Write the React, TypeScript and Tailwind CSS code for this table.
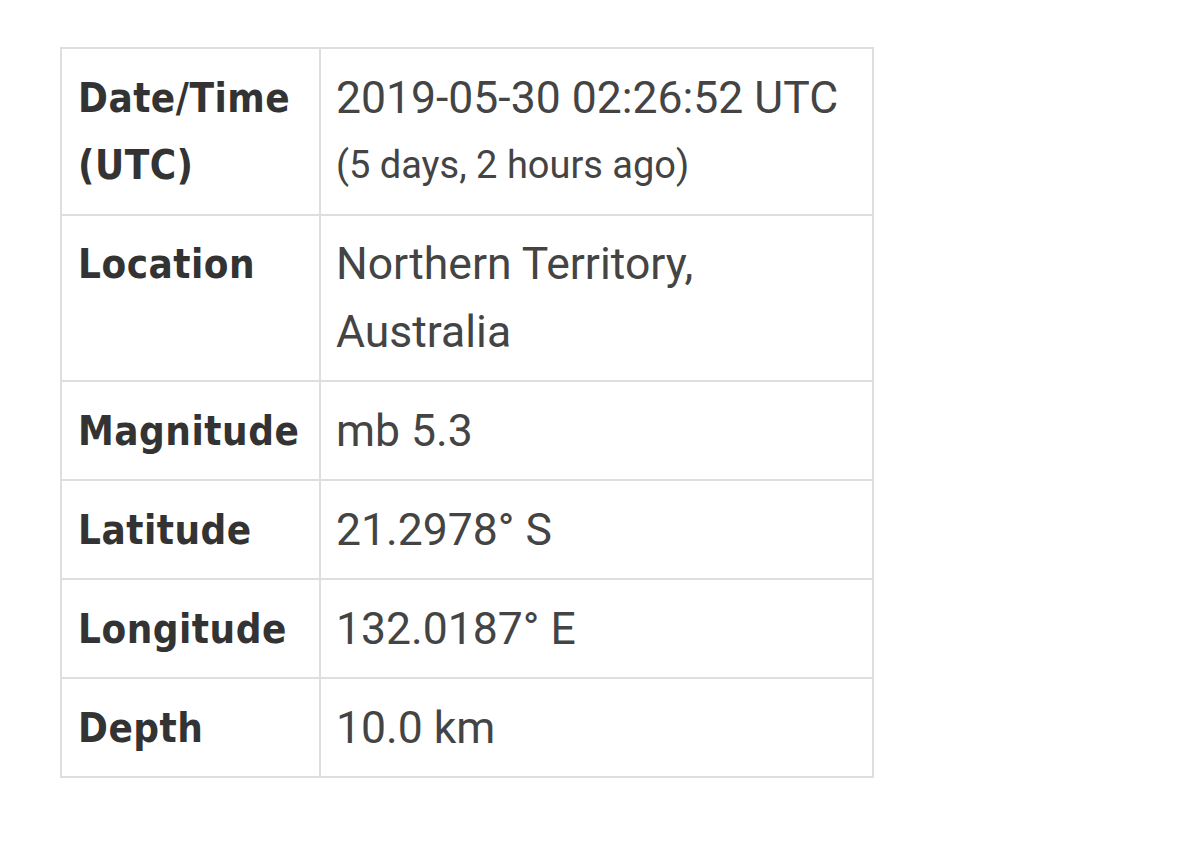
const rows: { label: string[]; value: React.ReactNode }[] = [
  {
    label: ["Date/Time", "(UTC)"],
    value: (
      <>
        <div>2019-05-30 02:26:52 UTC</div>
        <div className="text-[38px]">(5 days, 2 hours ago)</div>
      </>
    ),
  },
  { label: ["Location"], value: <>Northern Territory,<br />Australia</> },
  { label: ["Magnitude"], value: "mb 5.3" },
  { label: ["Latitude"], value: "21.2978° S" },
  { label: ["Longitude"], value: "132.0187° E" },
  { label: ["Depth"], value: "10.0 km" },
];

export default function App() {
  return (
    <div className="min-h-[842px] w-[1200px] bg-white pl-[60px] pt-[47px]">
      <table className="w-[814px] table-fixed border-collapse border-2 border-[#dedede]">
        <colgroup>
          <col className="w-[259px]" />
          <col />
        </colgroup>
        <tbody>
          {rows.map((r) => (
            <tr key={r.label.join(" ")}>
              <td className="border-2 border-[#dedede] pl-4 pr-1 pt-[15.5px] pb-[14px] align-top text-[40px] leading-[67.5px] tracking-[0.5px] font-bold text-[#333] [font-family:'DejaVu_Sans_Condensed','DejaVu_Sans',sans-serif]">
                {r.label.map((l, i) => (
                  <div key={i}>{l}</div>
                ))}
              </td>
              <td className="border-2 border-[#dedede] pl-[15px] pr-4 pt-[15.5px] pb-[14px] align-top text-[44.5px] leading-[67.5px] text-[#444] [font-family:Roboto,sans-serif]">
                {r.value}
              </td>
            </tr>
          ))}
        </tbody>
      </table>
    </div>
  );
}
